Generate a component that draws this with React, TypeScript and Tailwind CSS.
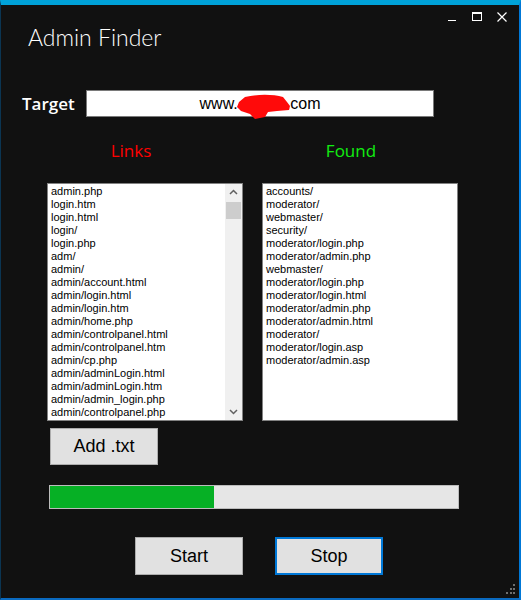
import React from "react";

const links = [
  "admin.php",
  "login.htm",
  "login.html",
  "login/",
  "login.php",
  "adm/",
  "admin/",
  "admin/account.html",
  "admin/login.html",
  "admin/login.htm",
  "admin/home.php",
  "admin/controlpanel.html",
  "admin/controlpanel.htm",
  "admin/cp.php",
  "admin/adminLogin.html",
  "admin/adminLogin.htm",
  "admin/admin_login.php",
  "admin/controlpanel.php",
];

const found = [
  "accounts/",
  "moderator/",
  "webmaster/",
  "security/",
  "moderator/login.php",
  "moderator/admin.php",
  "webmaster/",
  "moderator/login.php",
  "moderator/login.html",
  "moderator/admin.php",
  "moderator/admin.html",
  "moderator/",
  "moderator/login.asp",
  "moderator/admin.asp",
];

const ListBox = ({ items, scroll }: { items: string[]; scroll?: boolean }) => (
  <div className="w-[196px] h-[238px] border border-[#828282] bg-white flex overflow-hidden">
    <div className="flex-1 pt-[1px] pl-[3px] text-[11px] leading-[13px] text-black font-['Liberation_Sans',Arial,sans-serif] whitespace-nowrap overflow-hidden">
      {items.map((it, i) => (
        <div key={i}>{it}</div>
      ))}
    </div>
    {scroll && (
      <div className="w-[17px] bg-[#f0f0f0] flex flex-col items-center">
        <svg width="17" height="17" viewBox="0 0 17 17">
          <path d="M5 10 L8.5 6.5 L12 10" fill="none" stroke="#606060" strokeWidth="1.5" />
        </svg>
        <div className="w-[15px] h-[17px] bg-[#cdcdcd] mt-[1px]" />
        <div className="flex-1" />
        <svg width="17" height="17" viewBox="0 0 17 17">
          <path d="M5 7 L8.5 10.5 L12 7" fill="none" stroke="#606060" strokeWidth="1.5" />
        </svg>
      </div>
    )}
  </div>
);

const WinButton = ({ label, focused }: { label: string; focused?: boolean }) => (
  <button
    className={
      "w-[108px] h-[38px] bg-[#e1e1e1] text-black text-[18px] font-['Liberation_Sans',Arial,sans-serif] " +
      (focused ? "border-2 border-[#0078d7]" : "border border-[#adadad]")
    }
  >
    {label}
  </button>
);

export default function App() {
  return (
    <div className="w-[521px] h-[600px] bg-[#111111] flex flex-col border-t-[5px] border-t-[#00a2d9] border-l border-l-[#0b3552] border-r-2 border-r-[#0078d7] border-b-2 border-b-[#0a6ac0] font-['Liberation_Sans',Arial,sans-serif]">
      <div className="h-[20px] flex justify-end items-start pt-[7px] pr-[12px] gap-[15px]">
        <svg width="10" height="10" viewBox="0 0 10 10">
          <path d="M1 8.5 H9" stroke="white" strokeWidth="1" />
        </svg>
        <svg width="10" height="10" viewBox="0 0 10 10">
          <rect x="0.5" y="0.5" width="9" height="8" fill="none" stroke="white" strokeWidth="1" />
          <path d="M0.5 1.5 H9.5" stroke="white" strokeWidth="1" />
        </svg>
        <svg width="10" height="10" viewBox="0 0 10 10">
          <path d="M0.5 0.5 L9.5 9.5 M9.5 0.5 L0.5 9.5" stroke="white" strokeWidth="1.2" />
        </svg>
      </div>

      <div className="ml-[27px] text-white text-[23px] leading-[24px] font-light font-['Lato','Open_Sans',sans-serif]">
        Admin Finder
      </div>

      <div className="mt-[41px] flex items-center">
        <span className="ml-[21px] w-[64px] text-white text-[17px] font-semibold font-['Open_Sans',sans-serif]">
          Target
        </span>
        <div className="w-[348px] h-[27px] bg-white border border-[#7a7a7a] flex items-center justify-center text-[16px] text-black">
          <span>www.</span>
          <span className="relative inline-block w-[48px] h-[18px]">
            <svg
              className="absolute left-[-1px] top-[-1px]"
              width="54"
              height="26"
              viewBox="0 0 54 26"
            >
              <path
                d="M8 3 C20 0 36 0 46 3 L50 8 L53 12 L52 16 L40 17 L31 18 L28 23 L18 25 L13 20 L4 17 L0 13 L2 8 Z"
                fill="#ff0a0a"
              />
            </svg>
          </span>
          <span>.com</span>
        </div>
      </div>

      <div className="mt-[25px] flex text-[17px] leading-[18px] font-['Open_Sans',sans-serif]">
        <div className="ml-[80px] w-[100px] text-center text-[#ff0000]">Links</div>
        <div className="ml-[120px] w-[100px] text-center text-[#11ee11]">Found</div>
      </div>

      <div className="mt-[23px] flex gap-[19px] ml-[46px]">
        <ListBox items={links} scroll />
        <ListBox items={found} />
      </div>

      <div className="mt-[7px] ml-[49px]">
        <button className="w-[108px] h-[37px] bg-[#e1e1e1] border border-[#adadad] text-black text-[18px]">
          Add .txt
        </button>
      </div>

      <div className="mt-[20px] ml-[48px] w-[410px] h-[24px] bg-[#e6e6e6] border border-[#bcbcbc] flex">
        <div className="w-[164px] bg-[#06b025]" />
      </div>

      <div className="mt-[28px] ml-[134px] flex gap-[32px]">
        <WinButton label="Start" />
        <WinButton label="Stop" focused />
      </div>

      <div className="flex-1 flex justify-end items-end pr-[3px] pb-[4px]">
        <svg width="10" height="10" viewBox="0 0 10 10">
          <rect x="7" y="0" width="2" height="2" fill="#6f6f6f" />
          <rect x="4" y="4" width="2" height="2" fill="#6f6f6f" />
          <rect x="7" y="4" width="2" height="2" fill="#6f6f6f" />
          <rect x="0" y="8" width="2" height="2" fill="#6f6f6f" />
          <rect x="4" y="8" width="2" height="2" fill="#6f6f6f" />
          <rect x="7" y="8" width="2" height="2" fill="#6f6f6f" />
        </svg>
      </div>
    </div>
  );
}
